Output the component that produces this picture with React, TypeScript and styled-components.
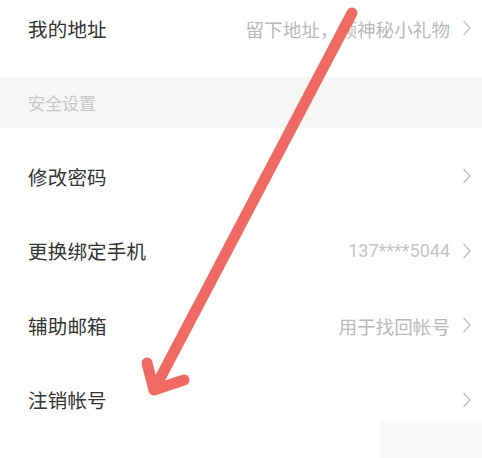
import React from 'react';
import styled, { createGlobalStyle } from 'styled-components';

const GlobalStyle = createGlobalStyle`
  html, body {
    margin: 0;
    padding: 0;
    background: #ffffff;
  }
  body {
    font-family: "Noto Sans CJK SC", "Noto Sans", sans-serif;
  }
`;

type Item = { title: string; value?: string; numeric?: boolean };

const securityItems: Item[] = [
  { title: '修改密码' },
  { title: '更换绑定手机', value: '137****5044', numeric: true },
  { title: '辅助邮箱', value: '用于找回帐号' },
  { title: '注销帐号' },
];

function Chevron() {
  return (
    <ChevronIcon viewBox="0 0 10 16" width="10" height="16">
      <path d="M2 1.5 L8 8 L2 14.5" fill="none" stroke="#c4c4c4" strokeWidth="1.6" strokeLinecap="round" strokeLinejoin="round" />
    </ChevronIcon>
  );
}

function SettingRow({ title, value, numeric, height }: Item & { height: number }) {
  return (
    <Row $height={height}>
      <Title>{title}</Title>
      <Right>
        {value && <Value $numeric={numeric}>{value}</Value>}
        <Chevron />
      </Right>
    </Row>
  );
}

export default function App() {
  return (
    <Page>
      <GlobalStyle />
      <TopGroup>
        <SettingRow title="我的地址" value="留下地址，领神秘小礼物" height={56} />
      </TopGroup>
      <SectionHeader>安全设置</SectionHeader>
      <Group>
        {securityItems.map((it) => (
          <SettingRow key={it.title} {...it} height={74.5} />
        ))}
      </Group>
      <Watermark />
      <Arrow viewBox="0 0 482 458" width="482" height="458">
        <g stroke="#ef6a62" strokeWidth="11" strokeLinecap="round" strokeLinejoin="round" fill="none">
          <line x1="352" y1="13" x2="156" y2="386" />
          <polyline points="147,363 154,390 184,380" />
        </g>
      </Arrow>
    </Page>
  );
}

const Page = styled.div`
  position: relative;
  width: 482px;
  height: 458px;
  overflow: hidden;
  background: #ffffff;
`;

const TopGroup = styled.div`
  padding-bottom: 21px;
`;

const Group = styled.div`
  padding-top: 11px;
`;

const SectionHeader = styled.div`
  height: 51px;
  background: #f6f6f6;
  display: flex;
  align-items: center;
  padding-left: 28px;
  font-size: 17px;
  color: #c6c6c6;
`;

const Row = styled.div<{ $height: number }>`
  height: ${(p) => p.$height}px;
  display: flex;
  align-items: center;
  justify-content: space-between;
  padding: 0 10px 0 28px;
`;

const Title = styled.span`
  font-size: 19.5px;
  color: #333333;
  letter-spacing: 0.2px;
`;

const Right = styled.div`
  display: flex;
  align-items: center;
  gap: 12px;
`;

const Value = styled.span<{ $numeric?: boolean }>`
  font-size: ${(p) => (p.$numeric ? '18px' : '18.6px')};
  color: ${(p) => (p.$numeric ? '#c4c4c4' : '#b9b9b9')};
  font-family: ${(p) => (p.$numeric ? '"Roboto", "Noto Sans CJK SC", sans-serif' : 'inherit')};
`;

const ChevronIcon = styled.svg`
  display: block;
`;

const Watermark = styled.div`
  position: absolute;
  left: 380px;
  top: 420px;
  width: 102px;
  height: 38px;
  background: #f9f9f9;
`;

const Arrow = styled.svg`
  position: absolute;
  left: 0;
  top: 0;
  pointer-events: none;
`;
